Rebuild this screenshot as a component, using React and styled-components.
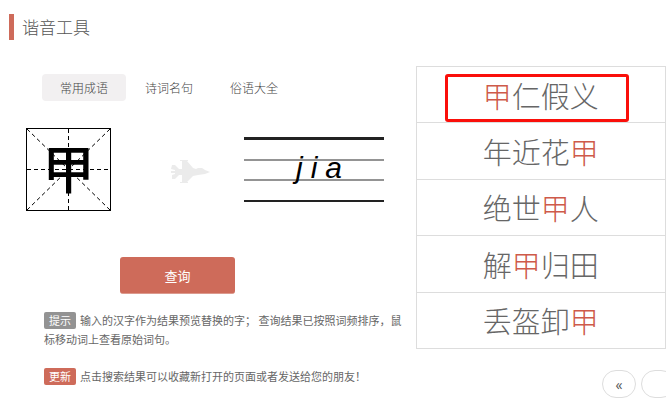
import React, { useState } from 'react';
import styled, { createGlobalStyle } from 'styled-components';

const GlobalStyle = createGlobalStyle`
  body {
    margin: 0;
    background: #fff;
    color: #666;
    font-family: "Noto Sans CJK SC", sans-serif;
    font-weight: 300;
    overflow: hidden;
  }

  button {
    font: inherit;
    cursor: pointer;
  }
`;

const Page = styled.main`
  padding: 14px 0 0 9px;
`;

const Title = styled.h1`
  margin: 0;
  padding-left: 8px;
  border-left: 5px solid #ce6b5a;
  color: #555;
  font-size: 17px;
  font-weight: 300;
  line-height: 26px;
`;

const Columns = styled.div`
  display: grid;
  grid-template-columns: minmax(0, 1fr) 250px;
  margin-top: 26px;
`;

const Tool = styled.section`
  padding: 8px 0 0 17px;
`;

const Tabs = styled.div`
  display: flex;
  gap: 1px;
  padding-left: 16px;
`;

const Tab = styled.button`
  width: 84px;
  height: 27px;
  padding: 0;
  border: 0;
  border-radius: 4px;
  background: ${({ $active }) => ($active ? '#f2f0f1' : 'transparent')};
  color: #444;
  font-size: 12px;
`;

const Stage = styled.div`
  display: grid;
  grid-template-columns: 85px minmax(0, 1fr) 140px;
  align-items: center;
  margin: 27px 32px 0 0;
`;

const CharBox = styled.div`
  position: relative;
  height: 83px;
  color: #000;
  font-size: 52px;
  font-weight: 500;
  line-height: 77px;
  text-align: center;
`;

const Guides = styled.svg`
  position: absolute;
  inset: 0;
  width: 100%;
  height: 100%;
`;

const Plane = styled.svg`
  justify-self: end;
  width: 40px;
  height: 24px;
  margin: 4px 33px 0 0;
`;

const Pinyin = styled.div`
  position: relative;
  display: grid;
  grid-template-rows: 21px 20px 19px;
  border: solid #222;
  border-width: 3px 0 2px;
`;

const Rule = styled.div`
  border-bottom: ${({ $last }) => ($last ? '0' : '2px solid #949494')};
`;

const Letters = styled.div`
  position: absolute;
  inset: 0;
  display: flex;
  align-items: center;
  justify-content: center;
  gap: 8px;
  padding: 0 0 4px 10px;
  color: #000;
  font: italic 400 30px "Liberation Sans", Arial, sans-serif;
`;

const Query = styled.button`
  display: block;
  width: 115px;
  height: 37px;
  margin: 46px 0 0 94px;
  padding: 0;
  border: 0;
  border-bottom: 1px solid #dc9a8e;
  border-radius: 3px;
  background: #ce6b5a;
  color: #fff;
  font-size: 13px;
  font-weight: 400;
`;

const Notes = styled.div`
  margin: 17px 8px 0 18px;
`;

const Note = styled.p`
  margin: 0 0 18px;
  font-size: 11px;
  font-weight: 400;
  line-height: 19px;
`;

const Badge = styled.span`
  display: inline-block;
  width: 32px;
  margin-right: 4px;
  border-radius: 2px;
  background: ${({ $color }) => $color};
  color: #fff;
  line-height: 17px;
  text-align: center;
`;

const Results = styled.section`
  overflow: hidden;
`;

const Table = styled.table`
  width: 498px;
  height: 283px;
  border-collapse: collapse;
  table-layout: fixed;
`;

const Cell = styled.td`
  position: relative;
  padding: 0;
  border: 1px solid #ddd;
  color: #666;
  font-size: 29px;
  line-height: 40px;
  text-align: center;
`;

const Hit = styled.span`
  color: #ce5a4a;
`;

const Highlight = styled.span`
  position: absolute;
  inset: 7px 36px 0 28px;
  border: 3px solid #fa0f0a;
  border-radius: 3px;
`;

const Pager = styled.nav`
  display: flex;
  gap: 5px;
  padding: 21px 0 0 186px;
`;

const PageButton = styled.button`
  flex: 0 0 34px;
  height: 28px;
  padding: 0;
  border: 1px solid #ddd;
  border-radius: 14px;
  background: #fff;
  color: #555;
  font: 400 14px "Open Sans", sans-serif;
`;

const tabs = ['常用成语', '诗词名句', '俗语大全'];
const idioms = ['甲仁假义', '年近花甲', '绝世甲人', '解甲归田', '丢盔卸甲'];

const Idiom = ({ text }) => (
  <>
    {text.split('').map((char, i) => (char === '甲' ? <Hit key={i}>{char}</Hit> : char))}
  </>
);

const App = () => {
  const [active, setActive] = useState(0);

  return (
    <Page>
      <GlobalStyle />
      <Title>谐音工具</Title>
      <Columns>
        <Tool>
          <Tabs>
            {tabs.map((tab, i) => (
              <Tab key={tab} type="button" $active={i === active} onClick={() => setActive(i)}>
                {tab}
              </Tab>
            ))}
          </Tabs>
          <Stage>
            <CharBox>
              <Guides viewBox="0 0 85 83" fill="none" stroke="#000" aria-hidden="true">
                <rect x="0.5" y="0.5" width="84" height="82" />
                <path d="M1 1l83 81M84 1L1 82M42.5 1v81M1 41.5h83" strokeDasharray="4 3" />
              </Guides>
              甲
            </CharBox>
            <Plane viewBox="0 0 40 24" fill="#ebebeb" aria-hidden="true">
              <path d="M1 5h3l4 4h3V1H9V0h8v1h-1l6 7 3 1 2-1h4l3 2 5 2-5 2-7 1-5 1-6 6h1v1H9v-1h2v-7H8l-4 4H1v-4l3-1v-1H0v-2h4v-1l-4-1z" />
            </Plane>
            <Pinyin>
              <Rule />
              <Rule />
              <Rule $last />
              <Letters>
                <span>j</span>
                <span>i</span>
                <span>a</span>
              </Letters>
            </Pinyin>
          </Stage>
          <Query type="button">查询</Query>
          <Notes>
            <Note>
              <Badge $color="#939393">提示</Badge>
              输入的汉字作为结果预览替换的字； 查询结果已按照词频排序，鼠标移动词上查看原始词句。
            </Note>
            <Note>
              <Badge $color="#ce6b5a">更新</Badge>
              点击搜索结果可以收藏新打开的页面或者发送给您的朋友！
            </Note>
          </Notes>
        </Tool>
        <Results>
          <Table>
            <tbody>
              {idioms.map((idiom, i) => (
                <tr key={idiom}>
                  <Cell>
                    <Idiom text={idiom} />
                    {i === 0 && <Highlight />}
                  </Cell>
                  <Cell />
                </tr>
              ))}
            </tbody>
          </Table>
          <Pager>
            <PageButton type="button" aria-label="上一页">«</PageButton>
            <PageButton type="button" />
          </Pager>
        </Results>
      </Columns>
    </Page>
  );
};

export default App;
